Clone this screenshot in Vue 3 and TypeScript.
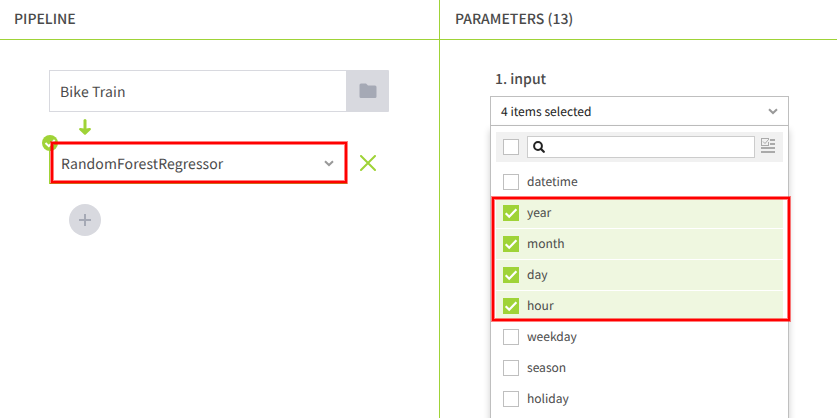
<script setup lang="ts">
interface Option { name: string; selected: boolean }
const options: Option[] = [
  { name: 'datetime', selected: false },
  { name: 'year', selected: true },
  { name: 'month', selected: true },
  { name: 'day', selected: true },
  { name: 'hour', selected: true },
  { name: 'weekday', selected: false },
  { name: 'season', selected: false },
  { name: 'holiday', selected: false },
]
</script>

<template>
  <main class="page">
    <section class="panel pipeline">
      <header class="head"><span>PIPELINE</span></header>
      <div class="flow">
        <div class="source">
          <div class="field"><span>Bike Train</span></div>
          <button class="folder" aria-label="Browse">
            <svg width="18" height="16" viewBox="0 0 18 16"><path d="M2 .5h5l2 2h7q1.500 0 1.500 1.500v9.500q0 1.500-1.500 1.500H2Q.5 15 .5 13.500V2Q.5.500 2 .500Z" fill="#a5a9b5" /></svg>
          </button>
        </div>
        <svg class="arrow" width="14" height="16" viewBox="0 0 14 16"><path d="M7 1.500v10" stroke="#9fd337" stroke-width="3" stroke-linecap="round" /><path d="M2.300 10.100 7 14.500l4.700-4.400-4.700.9Z" fill="#9fd337" stroke="#9fd337" stroke-width="2.400" stroke-linejoin="round" /></svg>
        <div class="step">
          <div class="model">
            <span>RandomForestRegressor</span>
            <svg width="10" height="7" viewBox="0 0 10 7"><path d="M1 1.200 5 5l4-3.800" fill="none" stroke="#999" stroke-width="2" /></svg>
            <svg class="badge" width="16" height="16" viewBox="0 0 16 16"><circle cx="8" cy="8" r="8" fill="#9fd337" /><path d="m3.500 8 3.300 3.200L12.700 5" fill="none" stroke="#fff" stroke-width="2" /></svg>
            <i class="mark"></i>
          </div>
          <svg class="remove" width="16" height="16" viewBox="0 0 16 16"><path d="m1 1 14 14M15 1 1 15" fill="none" stroke="#9fd337" stroke-width="2" stroke-linecap="round" /></svg>
        </div>
        <button class="add" aria-label="Add step">
          <svg width="12" height="12" viewBox="0 0 12 12"><path d="M6 0v12M0 6h12" stroke="#a5a9b5" stroke-width="2" /></svg>
        </button>
      </div>
    </section>

    <section class="panel params">
      <header class="head"><span>PARAMETERS (13)</span></header>
      <div class="group">
        <div class="label"><span>1. input</span></div>
        <div class="select">
          <span>4 items selected</span>
          <svg width="10" height="7" viewBox="0 0 10 7"><path d="M1 1.200 5 5l4-3.800" fill="none" stroke="#999" stroke-width="2" /></svg>
        </div>
        <div class="menu">
          <div class="search">
            <i class="box"></i>
            <div class="query">
              <svg width="12" height="12" viewBox="0 0 12 12"><circle cx="5" cy="5" r="3.900" fill="none" stroke="#222" stroke-width="2" /><path d="m7.800 7.800 3 3" stroke="#222" stroke-width="2.200" stroke-linecap="round" /></svg>
            </div>
            <svg class="filter" width="14" height="16" viewBox="0 0 14 16"><path d="M0 .5h8M.5 0v8M0 7.500h8M7.500 4v4M2 3.500l2 2L8 1" fill="none" stroke="#aaa" /><path d="M9 2h5M9 6h5M0 10h14M0 14h14" stroke="#aaa" stroke-width="2" /></svg>
          </div>
          <div v-for="o in options" :key="o.name" class="option" :class="{ selected: o.selected }">
            <i class="box"><svg v-if="o.selected" width="16" height="16" viewBox="0 0 16 16"><path d="m2.700 8.200 3.500 3.500 7.200-7.400" fill="none" stroke="#fff" stroke-width="2.200" /></svg></i>
            <span>{{ o.name }}</span>
          </div>
          <i class="mark"></i>
        </div>
      </div>
    </section>
  </main>
</template>

<style>
body { margin: 0; background: #fff; overflow: hidden; }
</style>
<style scoped>
* { box-sizing: border-box; }
.page { width: 837px; height: 418px; display: flex; overflow: hidden; font-family: "Noto Sans CJK SC", "Noto Sans", sans-serif; color: #4a4a4a; text-rendering: geometricPrecision; }
.page span { white-space: nowrap; }
.page svg { display: block; flex: none; }
button { border: 0; padding: 0; display: flex; align-items: center; justify-content: center; background: #d8d9df; }
.pipeline { width: 440px; border-right: 1px solid #9fd337; }
.params { width: 397px; }
.head { height: 40px; border-bottom: 1px solid #9fd337; padding: 0 14px 1px; display: flex; align-items: center; font-size: 14px; font-weight: 500; }
.params .head { padding-left: 15px; }
.flow { padding: 30px 0 0 49px; }
.source { display: flex; width: 340px; height: 42px; }
.field { flex: 1; border: 1px solid #d8d9df; border-right: 0; padding: 2px 10px 0; display: flex; align-items: center; font-size: 14px; letter-spacing: .13px; }
.folder { width: 43px; border-radius: 0 1px 1px 0; }
.arrow { margin: 7px 0 0 29px; }
.step { margin-top: 7px; display: flex; align-items: center; height: 42px; }
.model { position: relative; width: 298px; height: 42px; border: 1px solid #9fd337; padding: 0 12px 0 11px; display: flex; align-items: center; justify-content: space-between; font-size: 14px; letter-spacing: .1px; }
.model span { margin-top: 2px; }
.badge { position: absolute; left: -8px; top: -8px; }
.mark { position: absolute; border: 2px solid #f00; outline: 1px solid rgba(255, 0, 0, .5); box-shadow: inset 0 0 0 1px rgba(255, 0, 0, .5); pointer-events: none; }
.model .mark { left: 1px; top: -1px; width: 296px; height: 41px; }
.remove { margin-left: 13px; }
.add { width: 32px; height: 32px; border-radius: 50%; margin: 20px 0 0 20px; }
.group { margin: 29px 0 0 50px; width: 299px; }
.label { height: 27px; padding: 0 5px 7px; display: flex; align-items: center; font-size: 14px; font-weight: 500; }
.select { height: 30px; border: 1px solid #bfbfbf; padding: 0 10px; display: flex; align-items: center; justify-content: space-between; font-size: 12.100px; color: #222; }
.select span { margin-top: 1px; }
.menu { position: relative; height: 310px; border: solid #bfbfbf; border-width: 0 1px; padding: 6px 5px; background: #fff; box-shadow: 0 4px 7px rgba(0, 0, 0, .2); }
.search { height: 30px; background: #f1f1f1; padding: 0 8px 0 7px; display: flex; align-items: center; }
.box { width: 16px; height: 16px; border: 1px solid #bfbfbf; background: #fff; flex: none; display: block; }
.query { width: 228px; height: 22px; margin: 0 6px 0 8px; border: 1px solid #ccc; background: #fff; padding-left: 5px; display: flex; align-items: center; }
.filter { margin-top: -2px; }
.option { height: 31px; padding: 0 7px; display: flex; align-items: center; gap: 8px; font-size: 12.050px; border-bottom: 1px solid #fff; }
.option span { margin-top: -1px; }
.search + .option { margin-top: 5px; }
.selected { background: #eff7e0; }
.selected .box { border: 0; background: #9fd337; }
.menu .mark { left: 1px; top: 71px; width: 298px; height: 124px; }
</style>
